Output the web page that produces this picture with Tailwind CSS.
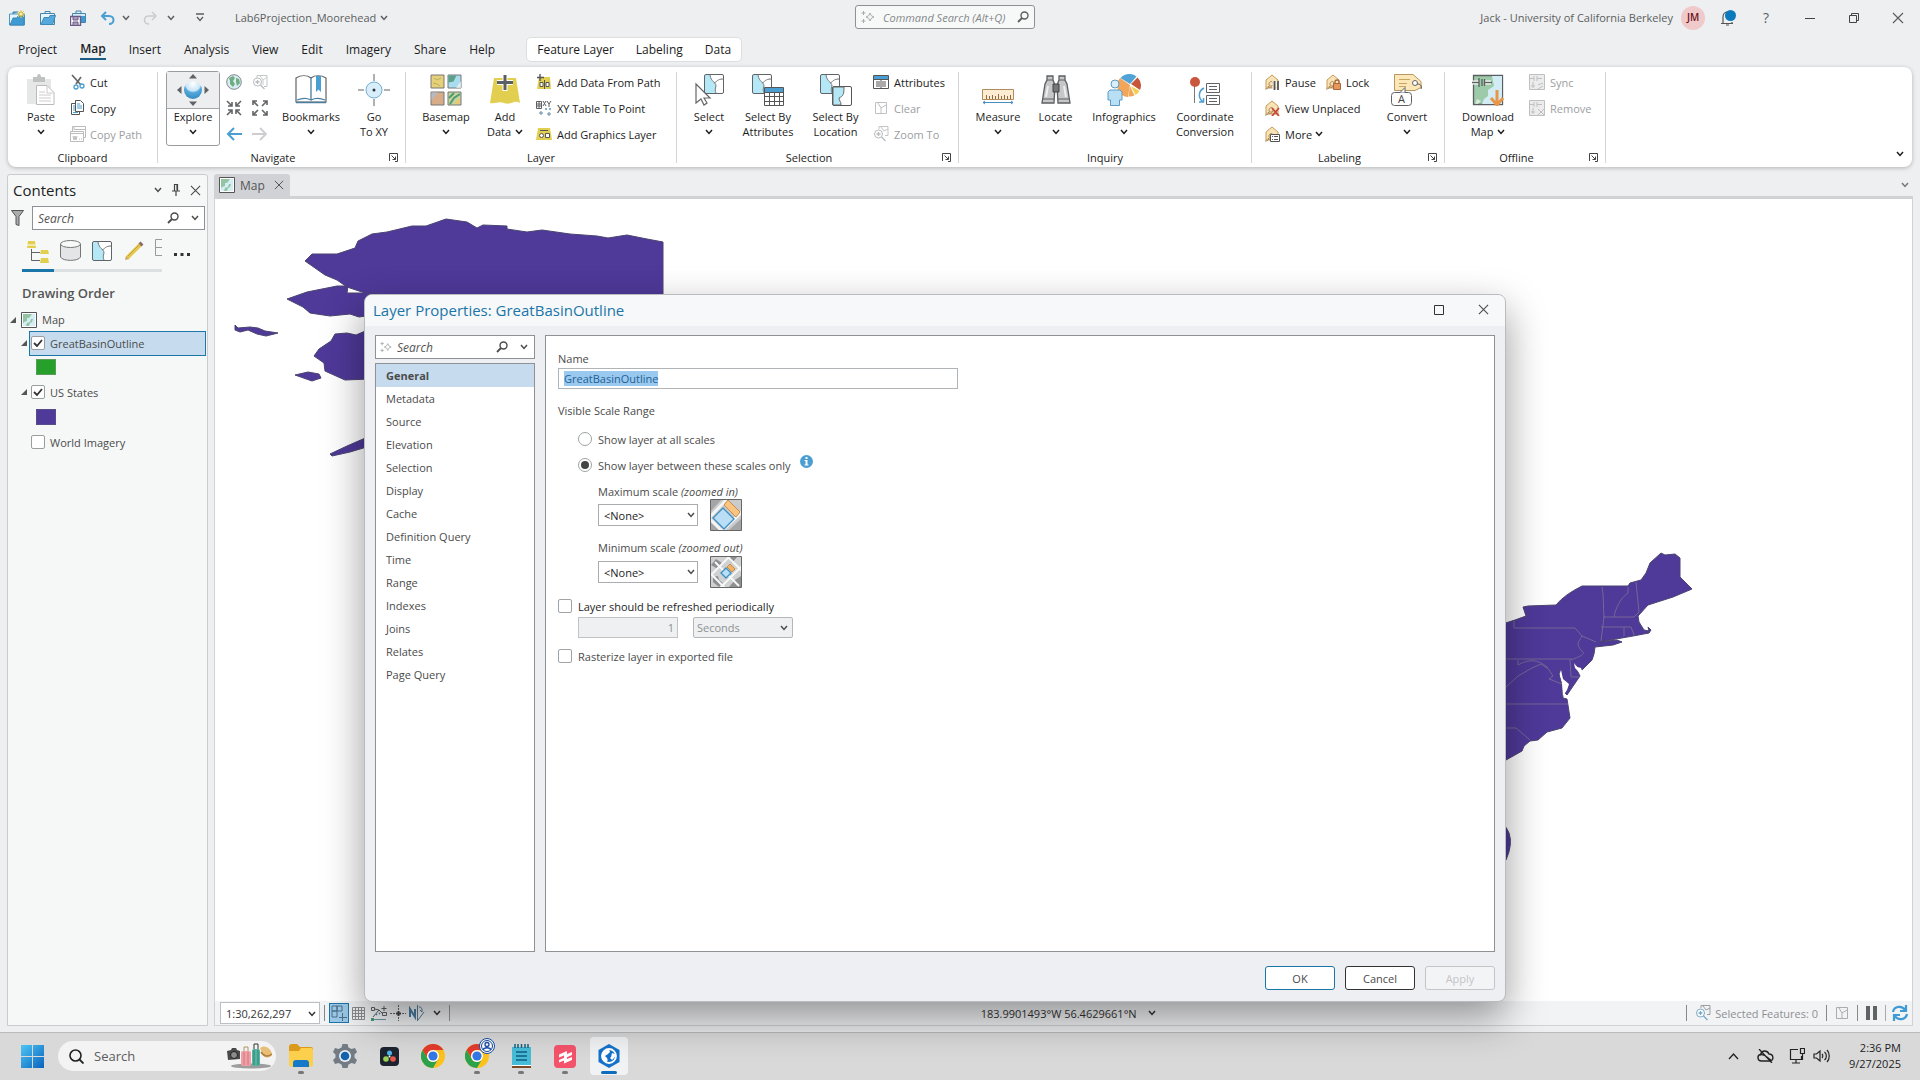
<!DOCTYPE html>
<html lang="en">

<head>
  <meta charset="UTF-8">
  <meta name="viewport" content="width=device-width, initial-scale=1.0">
  <title>Lab6Projection_Moorehead</title>
  <script src="https://cdn.jsdelivr.net/npm/@tailwindcss/browser@4"></script>
</head>

<body class="bg-[#edeff1] font-['Open_Sans',sans-serif] text-[11px] leading-[15px] text-[#1c1c1c]">
  <!-- Shared icons -->
  <svg class="hidden">
    <symbol id="chev" viewBox="0 0 8 6"><path d="M1 1l3 3.4L7 1" fill="none" stroke="currentColor" stroke-width="1.5" /></symbol>
    <symbol id="close" viewBox="0 0 12 12"><path d="M1 1l10 10M11 1L1 11" fill="none" stroke="currentColor" stroke-width="1.2" /></symbol>
    <symbol id="search" viewBox="0 0 12 12"><circle cx="7.5" cy="4.5" r="3.5" fill="none" stroke="currentColor" stroke-width="1.4" /><path d="M5 7L1 11" stroke="currentColor" stroke-width="1.8" /></symbol>
    <symbol id="sparkle" viewBox="0 0 14 14"><path d="M9 3l1.3 2.7L13 7l-2.700 1.300L9 11 7.700 8.300 5 7l2.700-1.300zM2.500 1v4M.5 3h4M2.500 9v4M.5 11h4" fill="none" stroke="#a9acae" /></symbol>
    <symbol id="launch" viewBox="0 0 9 9"><path d="M.5 8V.5H8.500V8.500H6M2.500 2.500l4 4M6.500 3.500v3h-3" fill="none" stroke="#444" /></symbol>
    <symbol id="mapicon" viewBox="0 0 16 16"><path d="M.5.5h15v15H.5z" fill="#fff" stroke="#555" /><path d="M2 2h12v12H2z" fill="#d3eef5" /><path d="M2 2h9l-3 4h-2v3l-3 1-1 2zM10 7h2l-1 3-2 1-1 3H5l1-3 3-1z" fill="#93c5a2" /></symbol>
    <symbol id="layer" viewBox="0 0 20 20"><rect x=".5" y=".5" width="19" height="19" rx="1.500" fill="#fff" /><path d="M1 1h5c1 7 6 7 6 11-1 3-1 5 0 7H1z" fill="#b5e8f7" /><path d="M6 1c1 7 6 7 6 11-1 3-1 5 0 7M10 9c3-1 3-4 9-4" fill="none" stroke="#777" /><rect x=".5" y=".5" width="19" height="19" rx="1.500" fill="none" stroke="#606468" /></symbol>
    <symbol id="label" viewBox="0 0 16 16"><path d="M2 14V6l6-5 6 5v8z" fill="#f7e3b5" stroke="#c79a5a" /><path d="M1 15c3 0 3-1 4-3M4 12c1 3 6 1 5-3-1-3-4-1-4 1 0 3 3 2 4 1" fill="none" stroke="#a98352" /></symbol>
    <symbol id="chrome" viewBox="0 0 24 24"><circle cx="12" cy="12" r="12" fill="#fcc31e" /><path d="M1.600 6A12 12 0 0 1 22.400 6H12a6 6 0 0 0-5.200 9z" fill="#e33b2e" /><path d="M1.600 6A12 12 0 0 0 12 24l5.200-9a6 6 0 0 1-10.400 0z" fill="#2da24c" /><circle cx="12" cy="12" r="6" fill="#fff" /><circle cx="12" cy="12" r="4.600" fill="#3478e5" /></symbol>
  </svg>

  <div class="flex h-screen flex-col overflow-hidden">
    <!-- Title bar -->
    <header class="relative flex h-[35px] shrink-0 items-center text-[#5c5e60]">
      <div class="flex items-center pl-[9px]">
        <button aria-label="New project" class="mr-[15px]"><svg class="size-4" viewBox="0 0 16 16"><path d="M.5 4h15v11H.5z" fill="#e8f4fb" stroke="#4c96c4" /><path d="M4 4V2h5M1 15L4 8h4l1-2h6v9z" fill="#3f9bd4" stroke="#3f87b5" /><path d="M12 0v8M8 4h8M9 1l6 6M15 1L9 7" stroke="#e0cc55" /><circle cx="12" cy="4" r="2" fill="#fdf3a0" stroke="#c9b23d" /></svg></button>
        <button aria-label="Open project" class="mr-[14px]"><svg class="size-4" viewBox="0 0 16 16"><path d="M.5 3.500h14v11H.5zM5 3V1.500h5V3" fill="#e8f4fb" stroke="#4684aa" /><path d="M1 14.500L4 7.500h5l1-2h5.500l-3 9z" fill="#55a9dc" stroke="#3f87b5" /></svg></button>
        <button aria-label="Save project" class="mr-[14px]"><svg class="size-4" viewBox="0 0 16 16"><path d="M2.500 3.500h13v9h-13zM6 3V1h5v2" fill="#d8ecf8" stroke="#4684aa" /><path d="M11 6h4v6h-4z" fill="#3f9bd4" /><path d="M.5 6.500h10v9H.5z" fill="#fff" stroke="#6b5a86" stroke-width="1.400" /><path d="M3 7v3h5V7M3 15v-3h5v3" fill="#a89abb" stroke="#6b5a86" /></svg></button>
        <button aria-label="Undo" class="mr-[7px]"><svg class="h-4 w-[15px]" viewBox="0 0 15 16"><path d="M6 2L2 6l4 4M2 6h7c6 0 6 8 0 8" fill="none" stroke="#4a9ed2" stroke-width="2" /></svg></button>
        <button aria-label="Undo list" class="mr-[13px]"><svg class="h-[6px] w-2"><use href="#chev" /></svg></button>
        <button aria-label="Redo" class="mr-[9px]"><svg class="h-4 w-[15px]" viewBox="0 0 15 16"><path d="M9 2l4 4-4 4M13 6H6c-6 0-6 8 0 8" fill="none" stroke="#cacccd" stroke-width="1.500" /></svg></button>
        <button aria-label="Redo list" class="mr-[21px]"><svg class="h-[6px] w-2"><use href="#chev" /></svg></button>
        <button aria-label="Customize toolbar" class="mr-[31px]"><svg class="h-[9px] w-2" viewBox="0 0 8 9"><path d="M0 1h8M1 4l3 3.500L7 4" fill="none" stroke="currentColor" stroke-width="1.300" /></svg></button>
        <button class="flex items-center gap-1">Lab6Projection_Moorehead <svg class="h-[6px] w-2"><use href="#chev" /></svg></button>
      </div>
      <div class="absolute left-[855px] top-[5px] flex h-[24px] w-[180px] items-center rounded-[3px] border border-[#8f9294] bg-[#f7f9f9] px-[5px]">
        <svg class="size-[14px] shrink-0"><use href="#sparkle" /></svg>
        <input aria-label="Command Search" placeholder="Command Search (Alt+Q)" class="min-w-0 flex-1 px-2 italic outline-none placeholder:text-[#85888b]">
        <svg class="size-3 shrink-0"><use href="#search" /></svg>
      </div>
      <div class="ml-auto flex items-center">
        <span>Jack - University of California Berkeley</span>
        <button class="ml-2 size-6 rounded-full bg-[#f0c9cb] text-[10px] font-semibold text-[#6b1218]">JM</button>
        <button aria-label="Notifications" class="ml-[15px]"><svg class="h-4 w-[16px]" viewBox="0 0 16 16"><path d="M1 13.500h12M3 13V7c0-3 2-5 5-5M6 15h3M12 12v1" fill="none" stroke="#555" stroke-width="1.200" /><circle cx="10.500" cy="5.500" r="5.500" fill="#0b79bd" /></svg></button>
        <button class="ml-[25px] w-[10px] text-[14px]">?</button>
        <button aria-label="Minimize" class="ml-[34px]"><svg class="size-[10px]" viewBox="0 0 10 10"><path d="M0 5.500h10" stroke="#444" /></svg></button>
        <button aria-label="Restore" class="ml-[34px]"><svg class="size-[10px]" viewBox="0 0 10 10"><path d="M.5 2.500h7v7h-7zM2.500 2V.5h7v7H8" fill="none" stroke="#444" /></svg></button>
        <button aria-label="Close" class="ml-[33px] mr-4"><svg class="size-3"><use href="#close" /></svg></button>
      </div>
    </header>

    <!-- Ribbon tabs -->
    <nav class="flex h-[32px] shrink-0 items-start pl-[18px] text-[12px] leading-[18px]">
      <div class="flex gap-[23px] pt-[5px]">
        <button>Project</button>
        <button class="border-b-2 border-[#1a5a85] font-semibold">Map</button>
        <button>Insert</button>
        <button>Analysis</button>
        <button>View</button>
        <button>Edit</button>
        <button>Imagery</button>
        <button>Share</button>
        <button>Help</button>
      </div>
      <div class="ml-[31px] mt-[2px] flex h-[25px] items-center gap-[22px] rounded-[5px] border border-[#dcdee0] bg-white px-[10px]">
        <button>Feature Layer</button>
        <button>Labeling</button>
        <button>Data</button>
      </div>
    </nav>

    <!-- Ribbon -->
    <div class="relative mx-2 flex h-[100px] shrink-0 rounded-[8px] bg-white pt-[2px] shadow-[0_1px_4px_rgba(0,0,0,0.25)]">
      <section class="flex w-[149px] flex-col">
        <div class="flex h-[79px] pl-[11px]">
          <button class="flex w-[44px] flex-col items-center justify-start pt-[5px]">
            <svg class="mb-[3px] size-8" viewBox="0 0 32 32"><path d="M2 5h24v25H2z" fill="#e6e7e7" /><path d="M8 3h4c0-4 4-4 4 0h4v5H8z" fill="#bfc1c2" /><path d="M11.500 11.500H22l7 7v12H11.500z" fill="#fff" stroke="#bbb" /><path d="M22 12v7h7M14 18h6M14 21h12M14 24h12M14 27h12" fill="none" stroke="#ccc" /></svg>
            Paste<svg class="mt-[5px] h-[6px] w-2"><use href="#chev" /></svg>
          </button>
          <div class="ml-[7px] flex flex-col">
            <button class="flex h-[26px] items-center gap-1"><svg class="size-4" viewBox="0 0 16 16"><path d="M2 1l9 10M11 3L6 10" stroke="#666" stroke-width="1.700" /><circle cx="6" cy="13" r="2" fill="none" stroke="#4a9ed2" stroke-width="1.300" /><circle cx="12" cy="12" r="2" fill="none" stroke="#4a9ed2" stroke-width="1.300" /></svg>Cut</button>
            <button class="flex h-[26px] items-center gap-1"><svg class="size-4" viewBox="0 0 16 16"><path d="M1.500 3.500h8v11h-8z" fill="#fff" stroke="#555" /><path d="M5.500.5h5l3 3v8h-8z" fill="#fff" stroke="#555" /><path d="M3 6h2M3 8h2M3 10h2M3 12.500h5M7 4h3M7 6h5M7 8h5" stroke="#4a9ed2" /></svg>Copy</button>
            <button disabled class="flex h-[26px] items-center gap-1 text-[#9b9ea1]"><svg class="size-4" viewBox="0 0 16 16"><path d="M2.500 5V.5h13v11H14M.5 5.500h13v10H.5zM1 7.500h12M4 .5v3h11" fill="none" stroke="#b9bbbd" /><path d="M3 10l1 4 1-4 1 4 1-4M9 13h1M11 13h1" fill="none" stroke="#b9bbbd" /></svg>Copy Path</button>
          </div>
        </div>
        <div class="grid flex-1 place-items-center">Clipboard</div>
      </section>
      <div class="mb-1 mt-[3px] w-px bg-[#d2d4d6]"></div>

      <section class="relative flex w-[247px] flex-col">
        <div class="flex h-[79px] pl-2">
          <button class="my-[2px] flex w-[54px] flex-col items-center rounded-[3px] border border-[#9a9da0]">
            <span class="flex h-[37px] w-full shrink-0 justify-center border-b border-[#a4a7a9] bg-[#eceeef] pt-[2px]"><svg class="size-8" viewBox="0 0 32 32"><defs><radialGradient id="ball" cx=".5" cy=".15" r=".9"><stop offset="0" stop-color="#fff" /><stop offset=".45" stop-color="#c8e6f7" /><stop offset=".55" stop-color="#56a9dc" /><stop offset="1" stop-color="#2f87bf" /></radialGradient></defs><circle cx="16" cy="16" r="9" fill="url(#ball)" /><path d="M16 0l4 4.500h-8zM16 32l4-4.500h-8zM0 16l4.500-4v8zM32 16l-4.500-4v8z" fill="#606366" /></svg></span>
            <span>Explore</span><svg class="mt-[5px] h-[6px] w-2"><use href="#chev" /></svg>
          </button>
          <div class="ml-px grid h-[78px] grid-cols-[26px_26px] grid-rows-3 place-items-center">
            <button aria-label="Full extent"><svg class="size-4" viewBox="0 0 16 16"><circle cx="8" cy="8" r="7.300" fill="#dbedf3" stroke="#7c8a8c" /><path d="M3 4l4-2 2 2-2 3 2 3-2 3-3-3 0-3zM10 4l3 1 1 4-3 3-1-4z" fill="#6fae83" /></svg></button>
            <button aria-label="Zoom to selection"><svg class="size-4" viewBox="0 0 16 16"><path d="M5 4V1.500h10v11h-3" fill="none" stroke="#c3c5c6" /><path d="M8 2l3 4 4-3M11 6v5" stroke="#c9cbcc" fill="none" /><circle cx="5.500" cy="8" r="4" fill="#fff" stroke="#b9bbbd" /><path d="M3.500 8h4M5.500 6v4M8.500 11l4 4" stroke="#b9bbbd" stroke-width="1.300" /></svg></button>
            <button aria-label="Fixed zoom in"><svg class="size-4" viewBox="0 0 16 16"><path d="M1 1l5 5M2 6h4V2M15 1l-5 5M10 2v4h4M1 15l5-5M2 10h4v4M15 15l-5-5M14 10h-4v4" fill="none" stroke="#626567" stroke-width="1.600" /></svg></button>
            <button aria-label="Fixed zoom out"><svg class="size-4" viewBox="0 0 16 16"><path d="M1 1l5 5M1 5V1h4M15 1l-5 5M11 1h4v4M1 15l5-5M1 11v4h4M15 15l-5-5M15 11v4h-4" fill="none" stroke="#626567" stroke-width="1.600" /></svg></button>
            <button aria-label="Previous extent"><svg class="size-4" viewBox="0 0 16 16"><path d="M8 2L2 8l6 6M2 8h14" fill="none" stroke="#4a9ed2" stroke-width="2" /></svg></button>
            <button aria-label="Next extent"><svg class="size-4" viewBox="0 0 16 16"><path d="M8 2l6 6-6 6M14 8H0" fill="none" stroke="#cbcdce" stroke-width="1.800" /></svg></button>
          </div>
          <button class="flex w-[76px] flex-col items-center pt-[5px]">
            <svg class="mb-[3px] size-8" viewBox="0 0 32 32"><path d="M1 26.500V4c5-3 11-3 15 0 4-3 10-3 15 0v24H1z" fill="#fff" stroke="#606366" stroke-width="1.200" /><path d="M1 28.500h30M2 26c5-2 10-2 14 0V4M16 26c4-2 9-2 14 0" fill="none" stroke="#4b7fa0" stroke-width="1.300" /><path d="M21 2h5v16l-2.500-2.500L21 18z" fill="#4a9ed2" /></svg>
            Bookmarks<svg class="mt-[5px] h-[6px] w-2"><use href="#chev" /></svg>
          </button>
          <button class="flex w-[50px] flex-col items-center pt-[5px]">
            <svg class="mb-[3px] size-8" viewBox="0 0 32 32"><path d="M16 0v7M16 25v7M0 16h6M26 16h6" stroke="#5e6264" /><circle cx="16" cy="16" r="8" fill="#d8eefa" stroke="#74aed2" /><circle cx="16" cy="16" r="1.500" fill="#333" /></svg>
            Go<br>To XY
          </button>
        </div>
        <div class="grid flex-1 place-items-center pr-[17px]">Navigate</div>
        <button aria-label="Navigate options" class="absolute bottom-[5px] right-[7px]"><svg class="size-[9px]"><use href="#launch" /></svg></button>
      </section>
      <div class="mb-1 mt-[3px] w-px bg-[#d2d4d6]"></div>

      <section class="flex w-[270px] flex-col">
        <div class="flex h-[79px] pl-[10px]">
          <button class="flex w-[60px] flex-col items-center pt-[5px]">
            <svg class="mb-[3px] size-8" viewBox="0 0 32 32"><path d="M1 1h13v13H1z" fill="#e6d17a" stroke="#777" /><path d="M4 4l3 2 4-2M3 9l4 1 3 2" stroke="#b6b25a" fill="none" /><path d="M18 1h13v13H18z" fill="#a9dcef" stroke="#777" /><path d="M18.500 1.500h8l-3 6-5 1z" fill="#5da08a" /><path d="M31 7l-5 7h5z" fill="#fff" opacity=".6" /><path d="M1 18h13v13H1z" fill="#d6ad88" stroke="#777" /><path d="M1.500 18.500h6l-6 8z" fill="#b4b8c9" /><path d="M18 18h13v13H18z" fill="#c9d49a" stroke="#777" /><path d="M19 24l5-5M20 30l4-6 6-4" stroke="#4b9c77" stroke-width="2" fill="none" /><path d="M25 30l2-4 3-1v5z" fill="#e8c77a" /></svg>
            Basemap<svg class="mt-[5px] h-[6px] w-2"><use href="#chev" /></svg>
          </button>
          <button class="flex w-[58px] flex-col items-center pt-[5px]">
            <svg class="mb-[3px] size-8" viewBox="0 0 32 32"><path d="M5 4h22l4 25c-6-4-10 3-16 0-5-2-8 1-14 0z" fill="#e3cf4f" /><path d="M16 0v17M8 8.500h16" stroke="#fff" stroke-width="5" /><path d="M16 1v15M8 8.500h16" stroke="#5c5f61" stroke-width="3" /></svg>
            Add<span class="flex items-center gap-1">Data <svg class="h-[6px] w-2"><use href="#chev" /></svg></span>
          </button>
          <div class="ml-[2px] flex flex-col">
            <button class="flex h-[26px] items-center gap-[5px]"><svg class="size-4" viewBox="0 0 16 16"><path d="M3 3h11l1 12H1z" fill="#e3cf4f" /><path d="M4 0v7M1 3.500h7" stroke="#555" stroke-width="1.400" /><path d="M4 8.500h3v4H4zM10 8.500h3v4h-3zM8.500 6v9" fill="#fff" stroke="#555" /></svg>Add Data From Path</button>
            <button class="flex h-[26px] items-center gap-[5px]"><svg class="size-4" viewBox="0 0 16 16"><path d="M.5 1.500h5v7h-5zM1 4h4M1 6h4M3 2v6M7 1l3 5M10 1L7 6M11 1l2 3 2-3M13 4v3" fill="none" stroke="#5c5f61" /><circle cx="10" cy="9" r="1" fill="#69a" /><circle cx="14" cy="9" r="1" fill="#69a" /><circle cx="5" cy="13" r="1.200" fill="none" stroke="#577f9c" /><circle cx="13" cy="14" r="1.200" fill="none" stroke="#577f9c" /></svg>XY Table To Point</button>
            <button class="flex h-[26px] items-center gap-[5px]"><svg class="size-4" viewBox="0 0 16 16"><path d="M2 2h12l2 12H0z" fill="#e3cf4f" /><path d="M4 4.500h8" stroke="#555" /><circle cx="5.500" cy="9.500" r="2" fill="#fff" stroke="#555" /><path d="M9.500 7.500h4v4h-4z" fill="#fff" stroke="#555" /></svg>Add Graphics Layer</button>
          </div>
        </div>
        <div class="grid flex-1 place-items-center">Layer</div>
      </section>
      <div class="mb-1 mt-[3px] w-px bg-[#d2d4d6]"></div>

      <section class="relative flex w-[281px] flex-col">
        <div class="flex h-[79px] pl-[7px]">
          <button class="flex w-[50px] flex-col items-center pt-[5px]">
            <svg class="mb-[3px] size-8" viewBox="0 0 32 32"><use href="#layer" x="11" y="0" width="20" height="20" /><path d="M3 10v19l5-4 3 6 3-2-3-5h6z" fill="#fff" stroke="#666" stroke-width="1.200" /></svg>
            Select<svg class="mt-[5px] h-[6px] w-2"><use href="#chev" /></svg>
          </button>
          <button class="flex w-[68px] flex-col items-center pt-[5px]">
            <svg class="mb-[3px] size-8" viewBox="0 0 32 32"><use href="#layer" x="0" y="0" width="20" height="20" /><path d="M12.500 13.500h19v18h-19z" fill="#fff" stroke="#555" /><path d="M13 14h18v4H13z" fill="#4a9ed2" /><path d="M13 18.500h18M13 22.500h18M13 27.500h18M17.500 18v13M22.500 18v13M27.500 18v13" stroke="#555" /></svg>
            Select By<br>Attributes
          </button>
          <button class="flex w-[67px] flex-col items-center pt-[5px]">
            <svg class="mb-[3px] size-8" viewBox="0 0 32 32"><use href="#layer" x="0" y="0" width="20" height="20" /><rect x="12.500" y="12.500" width="19" height="19" rx="1.500" fill="#fff" stroke="#555" /><path d="M13 13h11c0 8-1 9-5 11 0 3 2 3 2 7h-8z" fill="#b5e8f7" stroke="#666" /></svg>
            Select By<br>Location
          </button>
          <div class="ml-1 flex flex-col">
            <button class="flex h-[26px] items-center gap-[5px]"><svg class="size-4" viewBox="0 0 16 16"><path d="M.5 1.500h15v13H.5z" fill="#fff" stroke="#555" /><path d="M1 2h14v3H1z" fill="#4a9ed2" /><path d="M1 5.500h14M3 8h4M3 10h4M3 12h4M9 8h4M9 10h4M9 12h4M8 5v9" stroke="#555" /></svg>Attributes</button>
            <button disabled class="flex h-[26px] items-center gap-[5px] text-[#9b9ea1]"><svg class="size-4" viewBox="0 0 16 16"><path d="M2.500 2.500h11v11h-11zM5 3l3 5 5-3M8 8v5" fill="none" stroke="#bfc1c2" /></svg>Clear</button>
            <button disabled class="flex h-[26px] items-center gap-[5px] text-[#9b9ea1]"><svg class="size-4" viewBox="0 0 16 16"><path d="M6 3V.5h9v9h-3M8 1l3 4 4-2" fill="none" stroke="#c3c5c6" /><circle cx="5.500" cy="8" r="4" fill="#fff" stroke="#b9bbbd" /><path d="M3.500 8h4M5.500 6v4M8.500 11l4 4" stroke="#b9bbbd" stroke-width="1.300" /></svg>Zoom To</button>
          </div>
        </div>
        <div class="grid flex-1 place-items-center pr-[17px]">Selection</div>
        <button aria-label="Selection options" class="absolute bottom-[5px] right-[7px]"><svg class="size-[9px]"><use href="#launch" /></svg></button>
      </section>
      <div class="mb-1 mt-[3px] w-px bg-[#d2d4d6]"></div>

      <section class="flex w-[292px] flex-col">
        <div class="flex h-[79px] pl-[10px]">
          <button class="flex w-[58px] flex-col items-center pt-[5px]">
            <svg class="mb-[3px] size-8" viewBox="0 0 32 32"><path d="M.5 15.500h31v10H.5z" fill="#fcecd2" stroke="#b08d5e" /><path d="M4.500 25v-4M7.500 25v-3M10.500 25v-4M13.500 25v-3M16.500 25v-5M19.500 25v-3M22.500 25v-4M25.500 25v-3M28.500 25v-4" stroke="#8b6c44" /><path d="M1 28.500h30M3 27l-2 1.500L3 30M29 27l2 1.500L29 30" fill="none" stroke="#4a8fbd" /></svg>
            Measure<svg class="mt-[5px] h-[6px] w-2"><use href="#chev" /></svg>
          </button>
          <button class="flex w-[57px] flex-col items-center pt-[5px]">
            <svg class="mb-[3px] size-8" viewBox="0 0 32 32"><path d="M7 2h6v4l2 5-1 18H2l3-19 2-4zM19 2h6v4l2 4 3 19H18l-1-18 2-5z" fill="#c5c7c8" stroke="#5c5f61" stroke-width="1.300" /><path d="M13 10h6v8h-6z" fill="#777" stroke="#444" /><path d="M7 6h6M19 6h6M3 25h11M18 25h11" stroke="#5c5f61" /><path d="M8 12L6 23M24 12l2 11" stroke="#eee" stroke-width="2" /></svg>
            Locate<svg class="mt-[5px] h-[6px] w-2"><use href="#chev" /></svg>
          </button>
          <button class="flex w-[80px] flex-col items-center pt-[5px]">
            <svg class="mb-[3px] h-8 w-[34px]" viewBox="0 0 34 32"><path d="M23 11L13 4a11.500 11.500 0 0 0 8 19z" fill="#f2a65a" /><path d="M23 10L13.500 4a11.500 11.500 0 0 1 16-1.500z" fill="#4fa3d6" /><path d="M24 10l6.500-6.500A11.500 11.500 0 0 1 33 16z" fill="#c5563c" /><path d="M24 12l8.500 5a11 11 0 0 1-4 4z" fill="#f0d04e" /><path d="M23 12l4.500 9.500a11 11 0 0 1-6 1z" fill="#f2a65a" /><circle cx="8" cy="10" r="4" fill="#d9eefa" stroke="#5b9cc6" /><path d="M3 16h10l2 2v8h-2.500v5.500h-9V26H1v-8z" fill="#b9dff5" stroke="#5b9cc6" /></svg>
            Infographics<svg class="mt-[5px] h-[6px] w-2"><use href="#chev" /></svg>
          </button>
          <button class="flex w-[82px] flex-col items-center pt-[5px]">
            <svg class="mb-[3px] size-8" viewBox="0 0 32 32"><path d="M5.500 10v19" stroke="#777" /><circle cx="6" cy="8" r="5" fill="#c9563d" /><path d="M15 14c-6 3-6 10-1 14M10 28h4.500v-4" fill="none" stroke="#4a9ed2" stroke-width="1.500" /><path d="M17.500 9.500h13v9h-13zM17.500 21.500h13v9h-13z" fill="#fff" stroke="#606366" /><path d="M20 12.500h8M20 15.500h8M20 24.500h8M20 27.500h8" stroke="#606366" /></svg>
            Coordinate<br>Conversion
          </button>
        </div>
        <div class="grid flex-1 place-items-center">Inquiry</div>
      </section>
      <div class="mb-1 mt-[3px] w-px bg-[#d2d4d6]"></div>

      <section class="relative flex w-[192px] flex-col">
        <div class="flex h-[79px] pl-3">
          <div class="flex w-[113px] flex-col">
            <div class="flex gap-[9px]">
              <button class="flex h-[26px] items-center gap-[5px]"><svg class="size-4" viewBox="0 0 16 16"><use href="#label" width="16" height="16" /><path d="M10 7v9M14 7v9" stroke="#fff" stroke-width="3" /><path d="M10.500 7v9M14 7v9" stroke="#555" stroke-width="1.800" /></svg>Pause</button>
              <button class="flex h-[26px] items-center gap-[5px]"><svg class="size-4" viewBox="0 0 16 16"><use href="#label" width="16" height="16" /><path d="M10 9V7.500c0-2 4-2 4 0V9" fill="none" stroke="#a8643a" stroke-width="1.300" /><path d="M8.500 9.500h7v6h-7z" fill="#e8975a" stroke="#a8643a" /></svg>Lock</button>
            </div>
            <button class="flex h-[26px] items-center gap-[5px]"><svg class="size-4" viewBox="0 0 16 16"><use href="#label" width="16" height="16" /><path d="M8 8l7 8M15 8l-7 8" stroke="#c9463a" stroke-width="1.800" /></svg>View Unplaced</button>
            <button class="flex h-[26px] items-center gap-[5px]"><svg class="size-4" viewBox="0 0 16 16"><use href="#label" width="16" height="16" /><path d="M6.500 8.500h9v7h-9z" fill="#fff" stroke="#555" /><path d="M8 10.500h1M10 10.500h4M8 13.500h1M10 13.500h4" stroke="#555" /></svg><span class="flex items-center gap-[3px]">More <svg class="h-[6px] w-2"><use href="#chev" /></svg></span></button>
          </div>
          <button class="flex w-[60px] flex-col items-center pt-[5px]">
            <svg class="mb-[3px] size-8" viewBox="0 0 32 32"><path d="M3.500.5H22l8 7v6l-6 3H3.500z" fill="#fbe7b8" stroke="#b89762" /><path d="M8 5.500h11M8 9.500h8M8 12.500h7" stroke="#c9a565" /><circle cx="24" cy="9" r="2.500" fill="#fff" stroke="#666" /><path d="M26 10c4 0 5 2 4 5" fill="none" stroke="#555" /><rect x=".5" y="18.500" width="20" height="13" rx="3" fill="#fff" stroke="#606366" /><path d="M9 18.500l5-5v5" fill="#fff" stroke="#606366" /><text x="7" y="29" font-size="11" fill="#444">A</text></svg>
            Convert<svg class="mt-[5px] h-[6px] w-2"><use href="#chev" /></svg>
          </button>
        </div>
        <div class="grid flex-1 place-items-center pr-[17px]">Labeling</div>
        <button aria-label="Labeling options" class="absolute bottom-[5px] right-[7px]"><svg class="size-[9px]"><use href="#launch" /></svg></button>
      </section>
      <div class="mb-1 mt-[3px] w-px bg-[#d2d4d6]"></div>

      <section class="relative flex w-[160px] flex-col">
        <div class="flex h-[79px] pl-[13px]">
          <button class="flex w-[60px] flex-col items-center pt-[5px]">
            <svg class="mb-[3px] size-8" viewBox="0 0 32 32"><path d="M1.500 1.500h29v29h-29z" fill="#9dcaa8" stroke="#5c5f61" stroke-width="1.300" /><path d="M20 2h10v28H10l2-5 4-3 0-6 6-4z" fill="#d2ecf6" /><path d="M5 25l4 2-3 3H3z" fill="#fff" opacity=".6" /><path d="M0 8.500h7M12 8.500h7" stroke="#fff" stroke-width="4" /><path d="M0 8.500h7M7 4v9M10 5v7M12.500 5v7M12.500 8.500H20" stroke="#5c5f61" stroke-width="1.300" /><path d="M25 16v13M19 24l6 7 6-7" fill="none" stroke="#e8974a" stroke-width="3" /></svg>
            Download<span class="flex items-center gap-1">Map <svg class="h-[6px] w-2"><use href="#chev" /></svg></span>
          </button>
          <div class="ml-[11px] flex flex-col">
            <button disabled class="flex h-[26px] items-center gap-[5px] text-[#9b9ea1]"><svg class="size-4" viewBox="0 0 16 16"><path d="M.5.5h15v15H.5zM0 4.500h5M5 2v5M8 2v5M8 4.500h5M2 12h4M4 8v6M9 11l5-2M14 12l-5 3" fill="#ececec" stroke="#bdbfc1" /></svg>Sync</button>
            <button disabled class="flex h-[26px] items-center gap-[5px] text-[#9b9ea1]"><svg class="size-4" viewBox="0 0 16 16"><path d="M.5.5h15v15H.5zM0 4.500h5M5 2v5M8 2v5M8 4.500h5M2 12h4M4 8v6M9 9l6 6M15 9l-6 6" fill="#ececec" stroke="#bdbfc1" /></svg>Remove</button>
          </div>
        </div>
        <div class="grid flex-1 place-items-center pr-[17px]">Offline</div>
        <button aria-label="Offline options" class="absolute bottom-[5px] right-[7px]"><svg class="size-[9px]"><use href="#launch" /></svg></button>
      </section>
      <div class="mb-1 mt-[3px] w-px bg-[#d2d4d6]"></div>
      <button aria-label="Collapse ribbon" class="absolute bottom-[10px] right-2"><svg class="h-[6px] w-2"><use href="#chev" /></svg></button>
    </div>

    <!-- Workspace -->
    <main class="flex min-h-0 flex-1 gap-[6px] px-[7px] pb-[6px] pt-[7px]">
      <!-- Contents pane -->
      <aside class="w-[201px] shrink-0 rounded-t-[3px] border border-[#c9cccf] bg-[#f6f8f8] text-[#4b4b4b]">
        <div class="flex items-center pb-[4px] pl-[5px] pr-[6px] pt-[3px]">
          <h2 class="flex-1 text-[15px] leading-6 text-[#222]">Contents</h2>
          <button aria-label="Pane menu" class="mr-[10px]"><svg class="h-[6px] w-2"><use href="#chev" /></svg></button>
          <button aria-label="Auto hide" class="mr-[10px]"><svg class="h-[12px] w-[8px]" viewBox="0 0 8 12"><path d="M2.500 6.500V.5h3v6M0 7h8M4 7v5M5 1v5" fill="none" stroke="#444" stroke-width="1.200" /></svg></button>
          <button aria-label="Close pane"><svg class="size-[11px]"><use href="#close" /></svg></button>
        </div>
        <div class="flex items-center pl-[3px] pr-[2px]">
          <button aria-label="Filter" class="shrink-0"><svg class="h-[16px] w-[13px]" viewBox="0 0 13 16"><path d="M.5.5h12l-4.500 6v9l-3-1V6.500z" fill="#a9abad" stroke="#555" /></svg></button>
          <div class="ml-2 flex h-6 min-w-0 flex-1 items-center border border-[#8f9294] bg-white px-[5px]">
            <input aria-label="Search contents" placeholder="Search" class="min-w-0 flex-1 text-[12px] italic outline-none placeholder:text-[#555]">
            <svg class="size-3 shrink-0"><use href="#search" /></svg>
            <svg class="ml-3 h-[6px] w-2 shrink-0"><use href="#chev" /></svg>
          </div>
        </div>
        <div class="flex pl-[14px]">
          <button aria-label="List by drawing order" class="flex h-[42px] w-8 items-center justify-center border-b-[3px] border-[#1a75a8] pt-1"><svg class="h-[22px] w-[22px]" viewBox="0 0 22 22"><path d="M1 0h7l1 7H0zM14 9h7l1 4h-9zM14 17h7l1 5h-9z" fill="#e3cf4f" /><path d="M0 4h9" stroke="#fff" /><path d="M4.500 8v11.500H13M4.500 11.500H13" fill="none" stroke="#606366" /></svg></button>
          <button aria-label="List by data source" class="flex h-[42px] w-8 items-center justify-center border-b-[3px] border-[#dde0e2] pt-[2px]"><svg class="size-[21px]" viewBox="0 0 21 21"><path d="M.5 4v13c2 4.500 18 4.500 20 0V4" fill="#e3e5e6" stroke="#777" /><ellipse cx="10.500" cy="4" rx="10" ry="3.500" fill="#f7f8f8" stroke="#777" /></svg></button>
          <button aria-label="List by selection" class="flex h-[42px] w-8 items-center justify-center border-b-[3px] border-[#dde0e2] pt-[2px]"><svg class="size-[20px]"><use href="#layer" /></svg></button>
          <button aria-label="List by editing" class="flex h-[42px] w-8 items-center justify-center border-b-[3px] border-[#dde0e2] pt-[2px]"><svg class="size-[20px]" viewBox="0 0 20 20"><path d="M3 17L17 3" stroke="#e6c84f" stroke-width="4" /><path d="M16 4l2-2" stroke="#8a6b66" stroke-width="4" /><path d="M1 19l1-4 3 3z" fill="#c9a565" /><path d="M4 15L15 4" stroke="#b29a3a" stroke-width=".8" /></svg></button>
          <button aria-label="List by snapping" class="flex h-[42px] w-[12px] items-center justify-end border-b-[3px] border-[#dde0e2] pb-1"><svg class="h-[17px] w-[7px]" viewBox="0 0 7 17"><path d="M7 .5H.5v16H7M1 8.500h6" fill="none" stroke="#999" /></svg></button>
          <button aria-label="More views" class="ml-3 flex h-[42px] items-center pt-[6px]"><svg class="h-[3px] w-[16px]" viewBox="0 0 16 3"><path d="M0 0h3v3H0zM6.500 0h3v3h-3zM13 0h3v3h-3z" fill="#333" /></svg></button>
        </div>
        <h3 class="pb-[7px] pl-[14px] pt-[12px] text-[13px] font-semibold leading-[18px] text-[#555]">Drawing Order</h3>
        <ul>
          <li class="flex h-[21px] items-center pl-[2px]"><svg class="size-[6px]" viewBox="0 0 6 6"><path d="M6 0v6H0z" fill="#555" /></svg><svg class="ml-[5px] mr-[5px] size-4"><use href="#mapicon" /></svg>Map</li>
          <li>
            <div class="flex h-[26px] items-center pl-[13px]">
              <svg class="mr-[2px] size-[6px]" viewBox="0 0 6 6"><path d="M6 0v6H0z" fill="#555" /></svg>
              <label class="mr-px flex h-[25px] flex-1 items-center gap-[5px] border border-[#1a75a8] bg-[#c6dcee] pl-px">
                <span class="relative size-[14px]"><input type="checkbox" checked class="peer block size-[14px] appearance-none rounded-[2px] border border-[#9a9da0] bg-white"><svg class="pointer-events-none absolute left-[2px] top-[3px] hidden h-2 w-[10px] peer-checked:block" viewBox="0 0 10 8"><path d="M1 4l3 3 5-6" fill="none" stroke="#333" stroke-width="1.800" /></svg></span>GreatBasinOutline
              </label>
            </div>
            <div class="my-[3px] ml-[28px] h-4 w-[20px] border border-[#5b9c5b] bg-[#27a02b]"></div>
          </li>
          <li>
            <div class="flex h-[28px] items-center pl-[13px]">
              <svg class="mr-[2px] size-[6px]" viewBox="0 0 6 6"><path d="M6 0v6H0z" fill="#555" /></svg>
              <label class="flex items-center gap-[5px] pl-[2px]">
                <span class="relative size-[14px]"><input type="checkbox" checked class="peer block size-[14px] appearance-none rounded-[2px] border border-[#9a9da0] bg-white"><svg class="pointer-events-none absolute left-[2px] top-[3px] hidden h-2 w-[10px] peer-checked:block" viewBox="0 0 10 8"><path d="M1 4l3 3 5-6" fill="none" stroke="#333" stroke-width="1.800" /></svg></span>US States
              </label>
            </div>
            <div class="my-[3px] ml-[28px] h-4 w-[20px] border border-[#5a4c8a] bg-[#4f3999]"></div>
          </li>
          <li class="flex h-[28px] items-center pl-[21px]">
            <label class="flex items-center gap-[5px] pl-[2px]"><input type="checkbox" class="size-[14px] appearance-none rounded-[2px] border border-[#9a9da0] bg-white">World Imagery</label>
          </li>
        </ul>
      </aside>

      <!-- Map view -->
      <section class="flex min-w-0 flex-1 flex-col">
        <div class="flex h-[22px] shrink-0 items-center">
          <div class="flex h-full items-center rounded-t-[3px] bg-[#d0d2d5] pl-[5px] pr-[6px] text-[12px] text-[#555]">
            <svg class="mr-[5px] size-4"><use href="#mapicon" /></svg>Map
            <button aria-label="Close map" class="ml-[9px]"><svg class="size-[10px]"><use href="#close" /></svg></button>
          </div>
          <button aria-label="View list" class="ml-auto mr-1 text-[#777]"><svg class="h-[6px] w-2"><use href="#chev" /></svg></button>
        </div>
        <div class="flex min-h-0 flex-1 flex-col border border-t-[3px] border-[#d0d2d5] bg-white">
          <svg class="min-h-0 w-full flex-1" viewBox="215 198 1697 804" preserveAspectRatio="xMinYMin slice">
            <g fill="#4f3999" stroke="#4b4470">
              <path d="M305 260l7-7h25l18-6 3-7 14-7 15-2 25-6h14l20-7 21 3 10 6 6-3 24 1v3l20 3 15-2 28 4 27 2 11 2 19-3 20 4 16 3v70H374v-11l-9-8-18-6-10-7-12-5z" />
              <path d="M287 298l20-7 30-6h11l-1 7h30l10 20-28 4-9-3-20 2-20-3-7-6z" />
              <path d="M235 324l3 3 12-1 8 1 7 3 13 2-12 3-9-2-9-4-8 2-5-2z" />
              <path d="M314 355l5-7 12-8 4-7 12-1 9 2 14-6v50l-25 1-20-9-1-8z" />
              <path d="M295 374l13-3 11 2 2 4-9 3z" />
              <path d="M330 453l17-8 23-10v10l-20 6-18 4z" />
              <path d="M1490 627L1515 619 1526 615 1523 606 1528 605 1556 604Q1564 594 1582 585H1628L1630 582 1641 579 1646 572 1650 562 1661 552 1665 554 1675 553 1680 557V576L1692 588 1673 596 1648 604 1638 615 1639 621 1644 629 1649 630 1648 626 1651 629 1649 632 1633 635 1599 641 1617 639 1622 641 1613 644 1595 646 1594 653 1592 659 1582 669 1574 663 1580 675 1567 694 1565 692 1569 684 1562 679 1561 668 1559 673 1562 683 1563 697 1567 698 1570 717 1562 727 1547 731 1538 739 1530 740 1524 745 1522 750 1506 759 1490 768z" />
              <path d="M1490 815Q1520 827 1506 859L1490 869z" />
            </g>
            <path d="M1514 620v7h61l7 8 14 6M1582 635c-4 7-6 8-1 14 5 4 2 5-10 10M1500 658h72M1602 586c2 10 1 20 2 30l-3 24M1628 586v6c-8 6-12 14-14 24M1636 581l3 30-5 5h-31M1601 626h30l3 8M1624 626v9M1570 658l1 18h8M1518 659v5c10-6 20-6 29 2l6 9-4 3 13 5M1506 686l12-11 14-8 9-4 6 4M1500 703h68M1500 727h16l14 12" fill="none" stroke="#766796" />
            <path d="M1561 669l2 9 6 5-2 6-4 6-1-13-2-8zM1574 662l3 4 4 1 1 3-2 2-5-5z" fill="#fff" />
          </svg>
          <!-- Status bar -->
          <div class="flex h-[24px] shrink-0 items-center bg-[#f2f3f5] pl-[5px] pr-1 text-[#333]">
            <div class="relative"><select aria-label="Map scale" class="block h-[22px] w-[100px] appearance-none border border-[#bcbfc1] bg-white px-[5px] text-[11px] outline-none"><option>1:30,262,297</option></select><svg class="pointer-events-none absolute right-[4px] top-[9px] h-[6px] w-2"><use href="#chev" /></svg></div>
            <div class="ml-1 mr-1 h-4 w-px bg-[#888]"></div>
            <button aria-label="Selection grid" class="size-5 border border-[#1a75a8] bg-[#9bc9e8] p-px"><svg class="size-4" viewBox="0 0 16 16"><path d="M1 1h5v5H1zM6 1h5v5H6zM1 6h5v6H1zM11.500 8v8M8 12.500h8" fill="none" stroke="#4a6f88" /></svg></button>
            <button aria-label="Grid" class="ml-[3px]"><svg class="size-[13px]" viewBox="0 0 13 13"><path d="M.5.5h12v12H.5zM3.500 0v13M6.500 0v13M9.500 0v13M0 3.500h13M0 6.500h13M0 9.500h13" fill="none" stroke="#8a8d8f" /></svg></button>
            <button aria-label="Snapping" class="ml-[6px]"><svg class="size-4" viewBox="0 0 16 16"><path d="M.5 2.500h3v3h-3zM11.500 7.500h4v3h-4zM4 4l4 1 3 3M2 12l6-7M13 1v5M10.500 3.500h5" fill="none" stroke="#5c6062" /><path d="M5 9l1 1M8 8l1 1" stroke="#4a7fa5" stroke-width="1.500" /><path d="M3 14.500h12" stroke="#6a98b0" /><path d="M0 13h3v3H0z" fill="#4b9a77" /></svg></button>
            <button aria-label="Crosshair" class="ml-[3px]"><svg class="size-4" viewBox="0 0 16 16"><path d="M8.500 0v16M0 8.500h16" stroke="#666" stroke-dasharray="2 1" /><path d="M6 8.500h5M8.500 6v5" stroke="#444" stroke-width="2" /></svg></button>
            <button aria-label="North arrow" class="ml-[3px]"><svg class="size-4" viewBox="0 0 16 16"><path d="M1 12V4l5 8V4" fill="none" stroke="#4a7fa5" stroke-width="2" /><path d="M8.500 0v16M9 15l6-8M10 2c3 0 3 2 3 5l-2-2" fill="none" stroke="#577f9c" /></svg></button>
            <button aria-label="More tools" class="ml-2"><svg class="h-[6px] w-2"><use href="#chev" /></svg></button>
            <div class="ml-2 h-4 w-px bg-[#999]"></div>
            <div class="flex flex-1 items-center justify-center">183.9901493°W 56.4629661°N<button aria-label="Coordinate format" class="ml-[11px]"><svg class="h-[6px] w-2"><use href="#chev" /></svg></button></div>
            <div class="h-4 w-px bg-[#888]"></div>
            <svg class="ml-2 mr-1 size-4" viewBox="0 0 16 16"><path d="M6 3V.5h9v9h-3M8 1l3 4 4-2" fill="none" stroke="#9a9da0" /><circle cx="5.500" cy="8" r="4" fill="#fff" stroke="#78a8c6" /><path d="M3.500 8h4M5.500 6v4M8.500 11l4 4" stroke="#78a8c6" stroke-width="1.300" /></svg>
            <span class="text-[#8d9093]">Selected Features: 0</span>
            <div class="mx-2 h-4 w-px bg-[#888]"></div>
            <button aria-label="Clear selection"><svg class="size-[14px]" viewBox="0 0 14 14"><path d="M1.500 1.500h11v11h-11zM4 2l3 5 5-3M7 7v5" fill="none" stroke="#aaadaf" /></svg></button>
            <div class="mx-2 h-4 w-px bg-[#888]"></div>
            <button aria-label="Pause drawing"><svg class="h-[14px] w-[12px]" viewBox="0 0 12 14"><path d="M0 0h4v14H0zM7 0h4v14H7z" fill="#606366" /></svg></button>
            <div class="ml-[7px] mr-[6px] h-4 w-px bg-[#aaa]"></div>
            <button aria-label="Refresh"><svg class="size-4" viewBox="0 0 16 16"><path d="M1 7c1-6 9-7 12-2M15 9c-1 6-9 7-12 2M14 0v6H8M2 16v-6h6" fill="none" stroke="#3f9bd4" stroke-width="2.200" /></svg></button>
          </div>
        </div>
      </section>
    </main>

    <!-- Taskbar -->
    <footer class="flex h-[48px] shrink-0 items-center border-t border-[#b9babc] bg-[#d9d9da] pb-px pl-[21px]">
      <button aria-label="Start"><svg class="size-[23px]" viewBox="0 0 23 23"><defs><linearGradient id="win" x2="1" y2="1"><stop offset="0" stop-color="#4cc6f5" /><stop offset="1" stop-color="#0a62bd" /></linearGradient></defs><path d="M0 0h11v11H0zM12 0h11v11H12zM0 12h11v11H0zM12 12h11v11H12z" fill="url(#win)" /></svg></button>
      <label class="ml-[14px] flex h-[30px] w-[218px] items-center rounded-full bg-[#f3f3f3] pl-[11px] pr-1 text-[#444]">
        <svg class="size-[15px]" viewBox="0 0 15 15"><circle cx="6.500" cy="6.500" r="5.500" fill="none" stroke="#222" stroke-width="1.600" /><path d="M10.500 10.500l4 4" stroke="#222" stroke-width="1.800" /></svg>
        <input aria-label="Search Windows" placeholder="Search" class="ml-[10px] min-w-0 flex-1 text-[13px] outline-none placeholder:text-[#5c5c5c]">
        <svg class="h-[26px] w-[46px]" viewBox="0 0 46 26"><ellipse cx="25" cy="23" rx="20" ry="2.500" fill="#9d9d9d" /><path d="M1 8l4-1 1-2h4l1 2 3 1v8l-12 1z" fill="#4a4a4a" /><circle cx="8" cy="12" r="3.500" fill="#8c8c8c" stroke="#222" /><rect x="15" y="8" width="10" height="15" rx="2" fill="#ef9fa6" /><path d="M18 8V4h4v4" fill="none" stroke="#a96" /><path d="M18 9v13M22 9v13" stroke="#d4777f" /><rect x="26" y="6" width="8" height="17" rx="2" fill="#56b3a0" /><path d="M28 6V1h4v5" fill="none" stroke="#333" /><path d="M28 7v15M32 7v15" stroke="#2e8576" /><path d="M34 5c4-4 11 0 12 6-1 4-6 5-9 1z" fill="#e8bd76" /><path d="M35 9c3 5 8 5 11 2" stroke="#b07f3a" stroke-width="1.500" fill="none" /></svg>
      </label>
      <div class="ml-[3px] flex h-full items-center">
        <button aria-label="File Explorer" class="relative grid h-full w-11 place-items-center"><svg class="h-6 w-[26px]" viewBox="0 0 26 24"><path d="M1 3q0-3 3-3h5l3 3h11q2 0 2 2v6H1z" fill="#dc9a1a" /><path d="M1 7l10 0 2-3h10q2 0 2 2v14q0 3-3 3H4q-3 0-3-3z" fill="#fcd04c" /><path d="M5 23v-4q0-3 3-3h10q3 0 3 3v4z" fill="#1678c8" /></svg><i class="absolute bottom-[5px] h-[3px] w-[6px] rounded-full bg-[#777]"></i></button>
        <button aria-label="Settings" class="grid h-full w-11 place-items-center"><svg class="size-6" viewBox="0 0 24 24"><path d="M9.500 0h5l1 3.500 3 1.500 3.500-1 2 4-2.500 2.500v3L24 16l-2 4-3.500-1-3 1.500-1 3.500h-5l-1-3.500-3-1.500L2 20l-2-4 2.500-2.500v-3L0 8l2-4 3.500 1 3-1.500z" fill="#737b84" /><circle cx="12" cy="12" r="6" fill="#e8f1f8" /><circle cx="12" cy="12" r="4.300" fill="#1463ad" /></svg></button>
        <button aria-label="DaVinci Resolve" class="grid h-full w-11 place-items-center"><svg class="size-[19px]" viewBox="0 0 19 19"><rect width="19" height="19" rx="4" fill="#1d2430" /><circle cx="9.500" cy="6" r="2.500" fill="#4cb6e8" /><circle cx="6" cy="12" r="2.800" fill="#9bd354" /><circle cx="13" cy="12" r="2.800" fill="#e8574e" /><circle cx="9.500" cy="9.500" r="1" fill="#fff" /></svg></button>
        <button aria-label="Chrome" class="grid h-full w-11 place-items-center"><svg class="size-6"><use href="#chrome" /></svg></button>
        <button aria-label="Chrome profile" class="relative grid h-full w-11 place-items-center"><svg class="size-6"><use href="#chrome" /></svg><svg class="absolute right-[4px] top-[5px] size-4" viewBox="0 0 16 16"><circle cx="8" cy="8" r="7.500" fill="#fff" stroke="#174ea6" /><circle cx="8" cy="8" r="5.500" fill="none" stroke="#174ea6" /><circle cx="8" cy="6.500" r="2" fill="none" stroke="#174ea6" stroke-width="1.300" /><path d="M4 12c1-3 7-3 8 0" fill="none" stroke="#174ea6" stroke-width="1.300" /></svg><i class="absolute bottom-[5px] h-[3px] w-[6px] rounded-full bg-[#777]"></i></button>
        <button aria-label="Notepad" class="relative grid h-full w-11 place-items-center"><svg class="h-6 w-[19px]" viewBox="0 0 19 24"><path d="M0 3h19v18H0z" fill="#47bcd8" /><path d="M0 21h19v3H0z" fill="#7b4a22" /><path d="M0 21h19v1H0z" fill="#fff" /><path d="M3 0v4M6 0v4M9.500 0v4M13 0v4M16 0v4" stroke="#16607f" stroke-width="1.500" /><path d="M4 8h11M4 12h11M4 16h11" stroke="#125f80" stroke-width="1.600" /></svg><i class="absolute bottom-[5px] h-[3px] w-[6px] rounded-full bg-[#777]"></i></button>
        <button aria-label="Express Scribe" class="relative grid h-full w-11 place-items-center"><svg class="h-[23px] w-[22px]" viewBox="0 0 22 23"><rect width="22" height="23" rx="4" fill="#f4536b" /><path d="M5 9.500l8-3.500v3l5-2v3l-8 3.500v-3l-5 2zM5 15l8-3.500v2.500l5-2v3l-8 3.500v-3l-5 2z" fill="#fff" /></svg><i class="absolute bottom-[5px] h-[3px] w-[6px] rounded-full bg-[#777]"></i></button>
        <button aria-label="ArcGIS Pro" class="relative grid h-full w-11 place-items-center"><span class="grid h-[38px] w-[38px] place-items-center rounded-[4px] bg-[#f1f2f4]"><svg class="size-6" viewBox="0 0 24 24"><path d="M12 0l10.500 6v12L12 24 1.500 18V6z" fill="#1472cc" /><circle cx="12" cy="12" r="7" fill="#1472cc" stroke="#fff" stroke-width="1.800" /><path d="M12 5a7 7 0 0 0-4 13c3 0 3-2 2-4l-2-2 3-2 2-2zM15 9l3 1v3l-3 3-2-2 1-1z" fill="#fff" /></svg></span><i class="absolute bottom-[5px] h-[3px] w-4 rounded-full bg-[#0f6cbd]"></i></button>
      </div>
      <div class="ml-auto flex items-center pr-[19px]">
        <button aria-label="Hidden icons"><svg class="mr-[18px] h-[7px] w-[11px]" viewBox="0 0 11 7"><path d="M1 6l4.500-5L10 6" fill="none" stroke="#222" stroke-width="1.300" /></svg></button>
        <button aria-label="OneDrive"><svg class="mr-[15px] h-[14px] w-[17px]" viewBox="0 0 17 14"><path d="M4.500 12C0 12 0 6 3.500 5.500 5 1 10 1 12 5c5 0 5 7 1 7z" fill="#d9d9da" stroke="#222" stroke-width="1.400" /><path d="M3 6c5-2 7 3 11 5M2 0l13 14" stroke="#222" stroke-width="1.300" fill="none" /></svg></button>
        <button aria-label="Network"><svg class="mr-[8px] size-4" viewBox="0 0 16 16"><path d="M9 1.500H1.500v10h11V8M7 12v3M3 15h8M11.500.5h4v5h-4zM13.500 6v6" fill="none" stroke="#222" stroke-width="1.200" /></svg></button>
        <button aria-label="Volume"><svg class="mr-[19px] h-[14px] w-[17px]" viewBox="0 0 17 14"><path d="M1 5h2.500L7 2v10L3.500 9H1zM9 5c1 1 1 3 0 4M11.500 3c2.500 2 2.500 6 0 8M14 1c3 3 3 9 0 12" fill="none" stroke="#222" stroke-width="1.200" /></svg></button>
        <button class="text-right leading-[16px]">2:36 PM<br>9/27/2025</button>
      </div>
    </footer>
  </div>

  <!-- Layer properties dialog -->
  <div role="dialog" aria-labelledby="dlgTitle" class="absolute left-[364px] top-[294px] flex h-[708px] w-[1142px] flex-col overflow-hidden rounded-[8px] border border-[#b9bbbe] bg-[#eeeff2] text-[#4b4b4b] shadow-[0_16px_40px_rgba(0,0,0,0.4)]">
    <div class="flex h-[31px] shrink-0 items-center bg-[#f6f8f9] pb-[2px] pl-[8px] pr-[16px]">
      <h1 id="dlgTitle" class="flex-1 text-[15px] leading-5 text-[#1a75a8]">Layer Properties: GreatBasinOutline</h1>
      <button aria-label="Maximize" class="mr-[34px]"><svg class="size-[10px]" viewBox="0 0 10 10"><path d="M.5.5h9v9h-9z" fill="none" stroke="#333" /></svg></button>
      <button aria-label="Close dialog"><svg class="size-[11px]"><use href="#close" /></svg></button>
    </div>
    <div class="flex min-h-0 flex-1 gap-[10px] px-[10px] pt-[9px]">
      <div class="flex w-[160px] flex-col gap-1">
        <div class="flex h-6 shrink-0 items-center border border-[#8f9294] bg-white pl-1 pr-[6px]">
          <svg class="size-3 shrink-0"><use href="#sparkle" /></svg>
          <input aria-label="Search properties" placeholder="Search" class="ml-[5px] min-w-0 flex-1 text-[12px] italic outline-none placeholder:text-[#555]">
          <svg class="size-3 shrink-0"><use href="#search" /></svg>
          <svg class="ml-3 h-[6px] w-2 shrink-0"><use href="#chev" /></svg>
        </div>
        <div class="flex flex-1 flex-col border border-[#8f9294] bg-white *:h-[23px] *:px-[10px] *:text-left">
          <button class="bg-[#c6dcee] font-bold">General</button>
          <button>Metadata</button>
          <button>Source</button>
          <button>Elevation</button>
          <button>Selection</button>
          <button>Display</button>
          <button>Cache</button>
          <button>Definition Query</button>
          <button>Time</button>
          <button>Range</button>
          <button>Indexes</button>
          <button>Joins</button>
          <button>Relates</button>
          <button>Page Query</button>
        </div>
      </div>
      <form class="flex-1 border border-[#8f9294] bg-white pl-3 pt-[15px]">
        <label for="layerName" class="block">Name</label>
        <input id="layerName" value="GreatBasinOutline" class="mt-[2px] block h-[21px] w-[400px] border border-[#b1b4b6] px-[5px] outline-none selection:bg-[#99c9ef] selection:text-[#1f5f95]">
        <fieldset class="mt-[14px]">
          <legend>Visible Scale Range</legend>
          <div class="pl-5">
            <label class="mt-3 flex h-[18px] items-center gap-[6px]"><input type="radio" name="range" class="size-[14px] appearance-none rounded-full border border-[#a0a3a5]">Show layer at all scales</label>
            <div class="mt-2 flex h-[18px] items-center"><label class="flex items-center gap-[6px]"><input type="radio" name="range" checked class="grid size-[14px] appearance-none place-items-center rounded-full border border-[#a0a3a5] before:size-2 before:rounded-full before:bg-[#444] before:content-['']">Show layer between these scales only</label>
              <svg class="mb-2 ml-[10px] size-[13px]" viewBox="0 0 13 13"><circle cx="6.500" cy="6.500" r="6.500" fill="#4a9ed2" /><path d="M5.500 2h2v2h-2zM4.500 5h3v4.500h1v1h-4v-1h1V6h-1z" fill="#fff" /></svg>
            </div>
            <div class="pl-5">
              <label for="maxScale" class="mt-[10px] block leading-[16px]">Maximum scale <i>(zoomed in)</i></label>
              <div class="-mt-px flex items-center gap-3">
                <div class="relative"><select id="maxScale" class="block h-[22px] w-[100px] appearance-none border border-[#aaadaf] bg-white px-[5px] text-[#1c1c1c] outline-none"><option>&lt;None&gt;</option></select><svg class="pointer-events-none absolute right-[3px] top-[8px] h-[6px] w-2"><use href="#chev" /></svg></div>
                <svg class="size-8" viewBox="0 0 32 32"><path d="M.5.5h31v31H.5z" fill="#c9cbcc" /><path d="M1 1h10L1 12zM1 24l8 7H1zM31 20v11H19z" fill="#a3a5a7" /><path d="M0 18L17 0M12 32L32 13M0 20l12 12" stroke="#f4f4f4" stroke-width="3" /><path d="M13 9l11 11-10 10L3 19z" fill="#b9def5" stroke="#3f8fc4" stroke-width="1.300" /><path d="M18 1l12 12-4 5-12-12z" fill="#f8c583" stroke="#c98d45" /><path d="M.5.5h31v31H.5z" fill="none" stroke="#666" /></svg>
              </div>
              <label for="minScale" class="mt-[9px] block leading-[16px]">Minimum scale <i>(zoomed out)</i></label>
              <div class="flex items-center gap-3">
                <div class="relative"><select id="minScale" class="block h-[22px] w-[100px] appearance-none border border-[#aaadaf] bg-white px-[5px] text-[#1c1c1c] outline-none"><option>&lt;None&gt;</option></select><svg class="pointer-events-none absolute right-[3px] top-[8px] h-[6px] w-2"><use href="#chev" /></svg></div>
                <svg class="size-8" viewBox="0 0 32 32"><path d="M.5.5h31v31H.5z" fill="#cfd1d2" /><path d="M1 9l5-6 6 4-4 6zM18 1h9l-5 6zM3 21l5-1 1 4 4 3-4 4-6-5zM25 24l6-4v11H19z" fill="#8d8f91" /><path d="M0 20L20 0M10 32L32 10M5 6l24 24M0 17l15 15M17 0l15 15" stroke="#f7f7f7" stroke-width="2" /><path d="M16 12l5 5-5 5-5-5z" fill="#b9def5" stroke="#3f8fc4" stroke-width="1.300" /><path d="M20 8l5 5-3 3-5-5z" fill="#f2b163" stroke="#c98d45" /><path d="M.5.5h31v31H.5z" fill="none" stroke="#666" /></svg>
              </div>
            </div>
          </div>
        </fieldset>
        <label class="mt-[10px] flex h-4 items-center gap-[6px] text-[#1c1c1c]"><input type="checkbox" class="size-[14px] appearance-none rounded-[2px] border border-[#a0a3a5]">Layer should be refreshed periodically</label>
        <div class="mt-[3px] flex gap-[15px] pl-5">
          <input aria-label="Refresh interval" value="1" disabled class="h-[21px] w-[100px] border border-[#c0c2c4] bg-[#eff0f2] px-[3px] text-right text-[#8d9093]">
          <div class="relative"><select aria-label="Refresh unit" disabled class="block h-[21px] w-[100px] appearance-none rounded-[2px] border border-[#b4b7b9] bg-[#eff0f2] px-[3px] text-[#8d9093]"><option>Seconds</option></select><svg class="pointer-events-none absolute right-[5px] top-[8px] h-[6px] w-2"><use href="#chev" /></svg></div>
        </div>
        <label class="mt-[10px] flex h-4 items-center gap-[6px]"><input type="checkbox" class="size-[14px] appearance-none rounded-[2px] border border-[#a0a3a5]">Rasterize layer in exported file</label>
      </form>
    </div>
    <div class="flex shrink-0 justify-end gap-[10px] px-[10px] pb-[11px] pt-[14px]">
      <button class="h-6 w-[70px] rounded-[3px] border border-[#1a75a8] bg-white">OK</button>
      <button class="h-6 w-[70px] rounded-[3px] border border-[#333] bg-white">Cancel</button>
      <button disabled class="h-6 w-[70px] rounded-[3px] border border-[#c3c5c7] bg-[#f3f4f6] text-[#c3c5c7]">Apply</button>
    </div>
  </div>

  <script>
    // Start with the layer name selected, ready for renaming
    const layerName = document.getElementById('layerName');
    layerName.focus();
    layerName.select();
  </script>
</body>

</html>
